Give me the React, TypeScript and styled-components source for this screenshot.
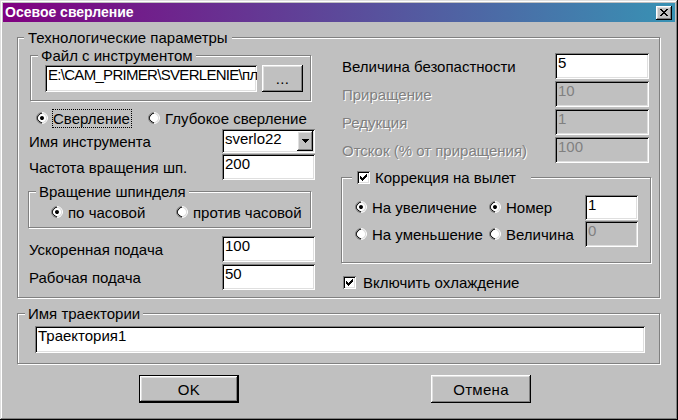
import React from "react";
import styled, { createGlobalStyle } from "styled-components";

const GlobalStyle = createGlobalStyle`
  * { box-sizing: border-box; }
  html, body { margin: 0; padding: 0; background: #c0c0c0; }
  body {
    font-family: "Liberation Sans", Arial, sans-serif;
    font-size: 15px;
    color: #000;
  }
`;

const raised = `inset -1px -1px #000, inset 1px 1px #fff, inset -2px -2px #808080, inset 2px 2px #dfdfdf`;
const sunken = `inset 1px 1px #808080, inset -1px -1px #fff, inset 2px 2px #000, inset -2px -2px #dfdfdf`;

const Window = styled.div`
  width: 678px;
  height: 420px;
  padding: 3px;
  display: flex;
  flex-direction: column;
  background: #c0c0c0;
  box-shadow: inset -1px -1px #000, inset 1px 1px #dfdfdf, inset -2px -2px #808080,
    inset 2px 2px #fff;
`;

const TitleBar = styled.div`
  height: 19px;
  flex-shrink: 0;
  display: flex;
  align-items: center;
  justify-content: space-between;
  padding: 0 3px 0 2px;
  background: linear-gradient(to right, #800080, #3892b4);
  color: #fff;
`;

const Caption = styled.span`
  font-size: 14px;
  font-weight: bold;
  line-height: 19px;
`;

const CloseButton = styled.div`
  width: 16px;
  height: 14px;
  display: flex;
  align-items: center;
  justify-content: center;
  background: #c0c0c0;
  box-shadow: ${raised};
`;

const Body = styled.div`
  flex: 1;
  display: flex;
  flex-direction: column;
  padding: 15px 15px 0 14px;
`;

const Group = styled.div<{ $w?: number; $h: number; $mt?: number; $ml?: number; $pad?: string }>`
  position: relative;
  width: ${(p) => (p.$w ? `${p.$w}px` : "auto")};
  height: ${(p) => p.$h}px;
  margin-top: ${(p) => p.$mt ?? 0}px;
  margin-left: ${(p) => p.$ml ?? 0}px;
  padding: ${(p) => p.$pad ?? "0"};
  border: 1px solid #808080;
  box-shadow: inset 1px 1px #fff, 1px 1px #fff;
`;

const GroupTitle = styled.div<{ $left?: number; $padR?: number; $padL?: number }>`
  position: absolute;
  top: -9px;
  left: ${(p) => p.$left ?? 7}px;
  display: flex;
  align-items: center;
  gap: 5px;
  padding: 0 ${(p) => p.$padR ?? 3}px 0 ${(p) => p.$padL ?? 3}px;
  line-height: 17px;
  background: #c0c0c0;
  white-space: nowrap;
`;

const Columns = styled.div`
  display: flex;
  padding-left: 10px;
`;

const LeftColumn = styled.div`
  width: 287px;
  display: flex;
  flex-direction: column;
`;

const RightColumn = styled.div`
  width: 310px;
  margin-left: 26px;
  display: flex;
  flex-direction: column;
`;

const FieldRow = styled.div<{ $mt?: number; $h?: number; $pr?: number }>`
  display: flex;
  align-items: center;
  justify-content: space-between;
  height: ${(p) => p.$h ?? 26}px;
  margin-top: ${(p) => p.$mt ?? 0}px;
  padding-right: ${(p) => p.$pr ?? 0}px;
`;

const Label = styled.span<{ $disabled?: boolean }>`
  padding-left: 1px;
  white-space: nowrap;
  color: ${(p) => (p.$disabled ? "#808080" : "#000")};
  text-shadow: ${(p) => (p.$disabled ? "1px 1px #fff" : "none")};
`;

const TextField = styled.div<{ $w: number; $h?: number; $disabled?: boolean; $tight?: boolean }>`
  width: ${(p) => p.$w}px;
  height: ${(p) => p.$h ?? 26}px;
  flex-shrink: 0;
  padding: 1px 3px 0;
  line-height: 17px;
  white-space: nowrap;
  overflow: hidden;
  letter-spacing: ${(p) => (p.$tight ? "-0.7px" : "normal")};
  background: ${(p) => (p.$disabled ? "#c0c0c0" : "#fff")};
  color: ${(p) => (p.$disabled ? "#808080" : "#000")};
  box-shadow: ${sunken};
`;

const ComboBox = styled.div`
  position: relative;
  width: 93px;
  height: 24px;
  padding: 1px 3px 0;
  line-height: 17px;
  background: #fff;
  box-shadow: ${sunken};
`;

const ComboArrow = styled.div`
  position: absolute;
  top: 2px;
  right: 2px;
  width: 16px;
  height: 20px;
  display: flex;
  align-items: center;
  justify-content: center;
  background: #c0c0c0;
  box-shadow: ${raised};
`;

const FileRow = styled.div`
  display: flex;
  gap: 5px;
`;

const PushButton = styled.div<{ $w: number; $h: number; $default?: boolean }>`
  width: ${(p) => p.$w}px;
  height: ${(p) => p.$h}px;
  display: flex;
  align-items: center;
  justify-content: center;
  background: #c0c0c0;
  border: ${(p) => (p.$default ? "1px solid #000" : "none")};
  box-shadow: ${raised};
  letter-spacing: 0.3px;
`;

const OptionRow = styled.div<{ $mt?: number; $ml?: number; $h?: number }>`
  display: flex;
  align-items: center;
  height: ${(p) => p.$h ?? 20}px;
  margin-top: ${(p) => p.$mt ?? 0}px;
  padding-left: ${(p) => p.$ml ?? 0}px;
`;

const Option = styled.label<{ $w?: number; $gap?: number }>`
  display: flex;
  align-items: center;
  gap: ${(p) => p.$gap ?? 4}px;
  width: ${(p) => (p.$w ? `${p.$w}px` : "auto")};
  flex-shrink: 0;
  white-space: nowrap;
`;

const OptionText = styled.span<{ $focused?: boolean }>`
  padding: 0 1px 0 0;
  line-height: 17px;
  border: 1px ${(p) => (p.$focused ? "dotted #000" : "solid transparent")};
`;

const RadioOuter = styled.span`
  width: 12px;
  height: 12px;
  flex-shrink: 0;
  border-radius: 50%;
  border: 1px solid;
  border-color: #808080 #fff #fff #808080;
  transform: rotate(-45deg);
`;

const RadioInner = styled.span<{ $checked?: boolean }>`
  display: flex;
  align-items: center;
  justify-content: center;
  width: 10px;
  height: 10px;
  border-radius: 50%;
  border: 1px solid;
  border-color: #000 #dfdfdf #dfdfdf #000;
  background: #fff;

  &::after {
    content: "";
    width: 4px;
    height: 4px;
    border-radius: 50%;
    background: ${(p) => (p.$checked ? "#000" : "transparent")};
  }
`;

const CheckBox = styled.span`
  width: 13px;
  height: 13px;
  flex-shrink: 0;
  display: flex;
  background: #fff;
  box-shadow: ${sunken};
`;

const ButtonRow = styled.div`
  display: flex;
  gap: 192px;
  margin-top: 11px;
  padding-left: 122px;
`;

const pixelRects = (rows: string[]) =>
  rows.flatMap((row, y) =>
    row.split("").map((c, x) => (c === "x" ? <rect key={`${x}-${y}`} x={x} y={y} width={1} height={1} /> : null))
  );

const CloseGlyph = () => (
  <svg width="8" height="7" shapeRendering="crispEdges" fill="#000">
    {pixelRects(["xx....xx", ".xx..xx.", "..xxxx..", "...xx...", "..xxxx..", ".xx..xx.", "xx....xx"])}
  </svg>
);

const ArrowGlyph = () => (
  <svg width="7" height="4" shapeRendering="crispEdges" fill="#000">
    {pixelRects(["xxxxxxx", ".xxxxx.", "..xxx..", "...x..."])}
  </svg>
);

const CheckGlyph = () => (
  <svg width="13" height="13" shapeRendering="crispEdges" fill="#000">
    <g transform="translate(3 3)">
      {pixelRects(["......x", ".....xx", "x...xxx", "xx.xxx.", "xxxxx..", ".xxx...", "..x...."])}
    </g>
  </svg>
);

const Radio = ({ checked }: { checked?: boolean }) => (
  <RadioOuter>
    <RadioInner $checked={checked} />
  </RadioOuter>
);

const Check = () => (
  <CheckBox>
    <CheckGlyph />
  </CheckBox>
);

const App = () => {
  return (
    <>
      <GlobalStyle />
      <Window>
        <TitleBar>
          <Caption>Осевое сверление</Caption>
          <CloseButton>
            <CloseGlyph />
          </CloseButton>
        </TitleBar>
        <Body>
          <Group $h={261}>
            <GroupTitle $left={6} $padL={4} $padR={4}>
              Технологические параметры
            </GroupTitle>
            <Columns>
              <LeftColumn>
                <Group $w={281} $h={46} $mt={17} $ml={2} $pad="9px 0 0 14px">
                  <GroupTitle>Файл с инструментом</GroupTitle>
                  <FileRow>
                    <TextField $w={212} $h={27} $tight>
                      E:\CAM_PRIMER\SVERLENIE\пл
                    </TextField>
                    <PushButton $w={41} $h={27}>
                      ...
                    </PushButton>
                  </FileRow>
                </Group>
                <OptionRow $mt={7} $ml={8}>
                  <Option $w={112}>
                    <Radio checked />
                    <OptionText $focused>Сверление</OptionText>
                  </Option>
                  <Option>
                    <Radio />
                    <OptionText>Глубокое сверление</OptionText>
                  </Option>
                </OptionRow>
                <FieldRow $mt={1} $h={24}>
                  <Label>Имя инструмента</Label>
                  <ComboBox>
                    sverlo22
                    <ComboArrow>
                      <ArrowGlyph />
                    </ComboArrow>
                  </ComboBox>
                </FieldRow>
                <FieldRow $mt={1}>
                  <Label>Частота вращения шп.</Label>
                  <TextField $w={93}>200</TextField>
                </FieldRow>
                <Group $w={283} $h={37} $mt={11} $pad="10px 0 0 22px">
                  <GroupTitle>Вращение шпинделя</GroupTitle>
                  <OptionRow>
                    <Option $w={125}>
                      <Radio checked />
                      <OptionText>по часовой</OptionText>
                    </Option>
                    <Option>
                      <Radio />
                      <OptionText>против часовой</OptionText>
                    </Option>
                  </OptionRow>
                </Group>
                <FieldRow $mt={8}>
                  <Label>Ускоренная подача</Label>
                  <TextField $w={93}>100</TextField>
                </FieldRow>
                <FieldRow $mt={2}>
                  <Label>Рабочая подача</Label>
                  <TextField $w={93}>50</TextField>
                </FieldRow>
              </LeftColumn>

              <RightColumn>
                <FieldRow $mt={15} $pr={2}>
                  <Label>Величина безопастности</Label>
                  <TextField $w={94}>5</TextField>
                </FieldRow>
                <FieldRow $mt={2} $pr={2}>
                  <Label $disabled>Приращение</Label>
                  <TextField $w={94} $disabled>
                    10
                  </TextField>
                </FieldRow>
                <FieldRow $mt={2} $pr={2}>
                  <Label $disabled>Редукция</Label>
                  <TextField $w={94} $disabled>
                    1
                  </TextField>
                </FieldRow>
                <FieldRow $mt={2} $pr={2}>
                  <Label $disabled>Отскок (% от приращения)</Label>
                  <TextField $w={94} $disabled>
                    100
                  </TextField>
                </FieldRow>
                <Group $w={310} $h={86} $mt={14} $pad="16px 0 0 13px">
                  <GroupTitle $left={10} $padL={5} $padR={15}>
                    <Check />
                    Коррекция на вылет
                  </GroupTitle>
                  <OptionRow $h={26}>
                    <Option $w={134}>
                      <Radio checked />
                      <OptionText>На увеличение</OptionText>
                    </Option>
                    <Option $w={96}>
                      <Radio checked />
                      <OptionText>Номер</OptionText>
                    </Option>
                    <TextField $w={53} $h={25}>
                      1
                    </TextField>
                  </OptionRow>
                  <OptionRow $h={26} $mt={1}>
                    <Option $w={134}>
                      <Radio />
                      <OptionText>На уменьшение</OptionText>
                    </Option>
                    <Option $w={96}>
                      <Radio />
                      <OptionText>Величина</OptionText>
                    </Option>
                    <TextField $w={53} $disabled>
                      0
                    </TextField>
                  </OptionRow>
                </Group>
                <OptionRow $mt={9} $ml={2}>
                  <Option $gap={6}>
                    <Check />
                    <OptionText>Включить охлаждение</OptionText>
                  </Option>
                </OptionRow>
              </RightColumn>
            </Columns>
          </Group>

          <Group $h={51} $mt={15} $pad="12px 0 0 17px">
            <GroupTitle>Имя траектории</GroupTitle>
            <TextField $w={610} $h={27}>
              Траектория1
            </TextField>
          </Group>

          <ButtonRow>
            <PushButton $w={100} $h={28} $default>
              OK
            </PushButton>
            <PushButton $w={100} $h={28}>
              Отмена
            </PushButton>
          </ButtonRow>
        </Body>
      </Window>
    </>
  );
};

export default App;
